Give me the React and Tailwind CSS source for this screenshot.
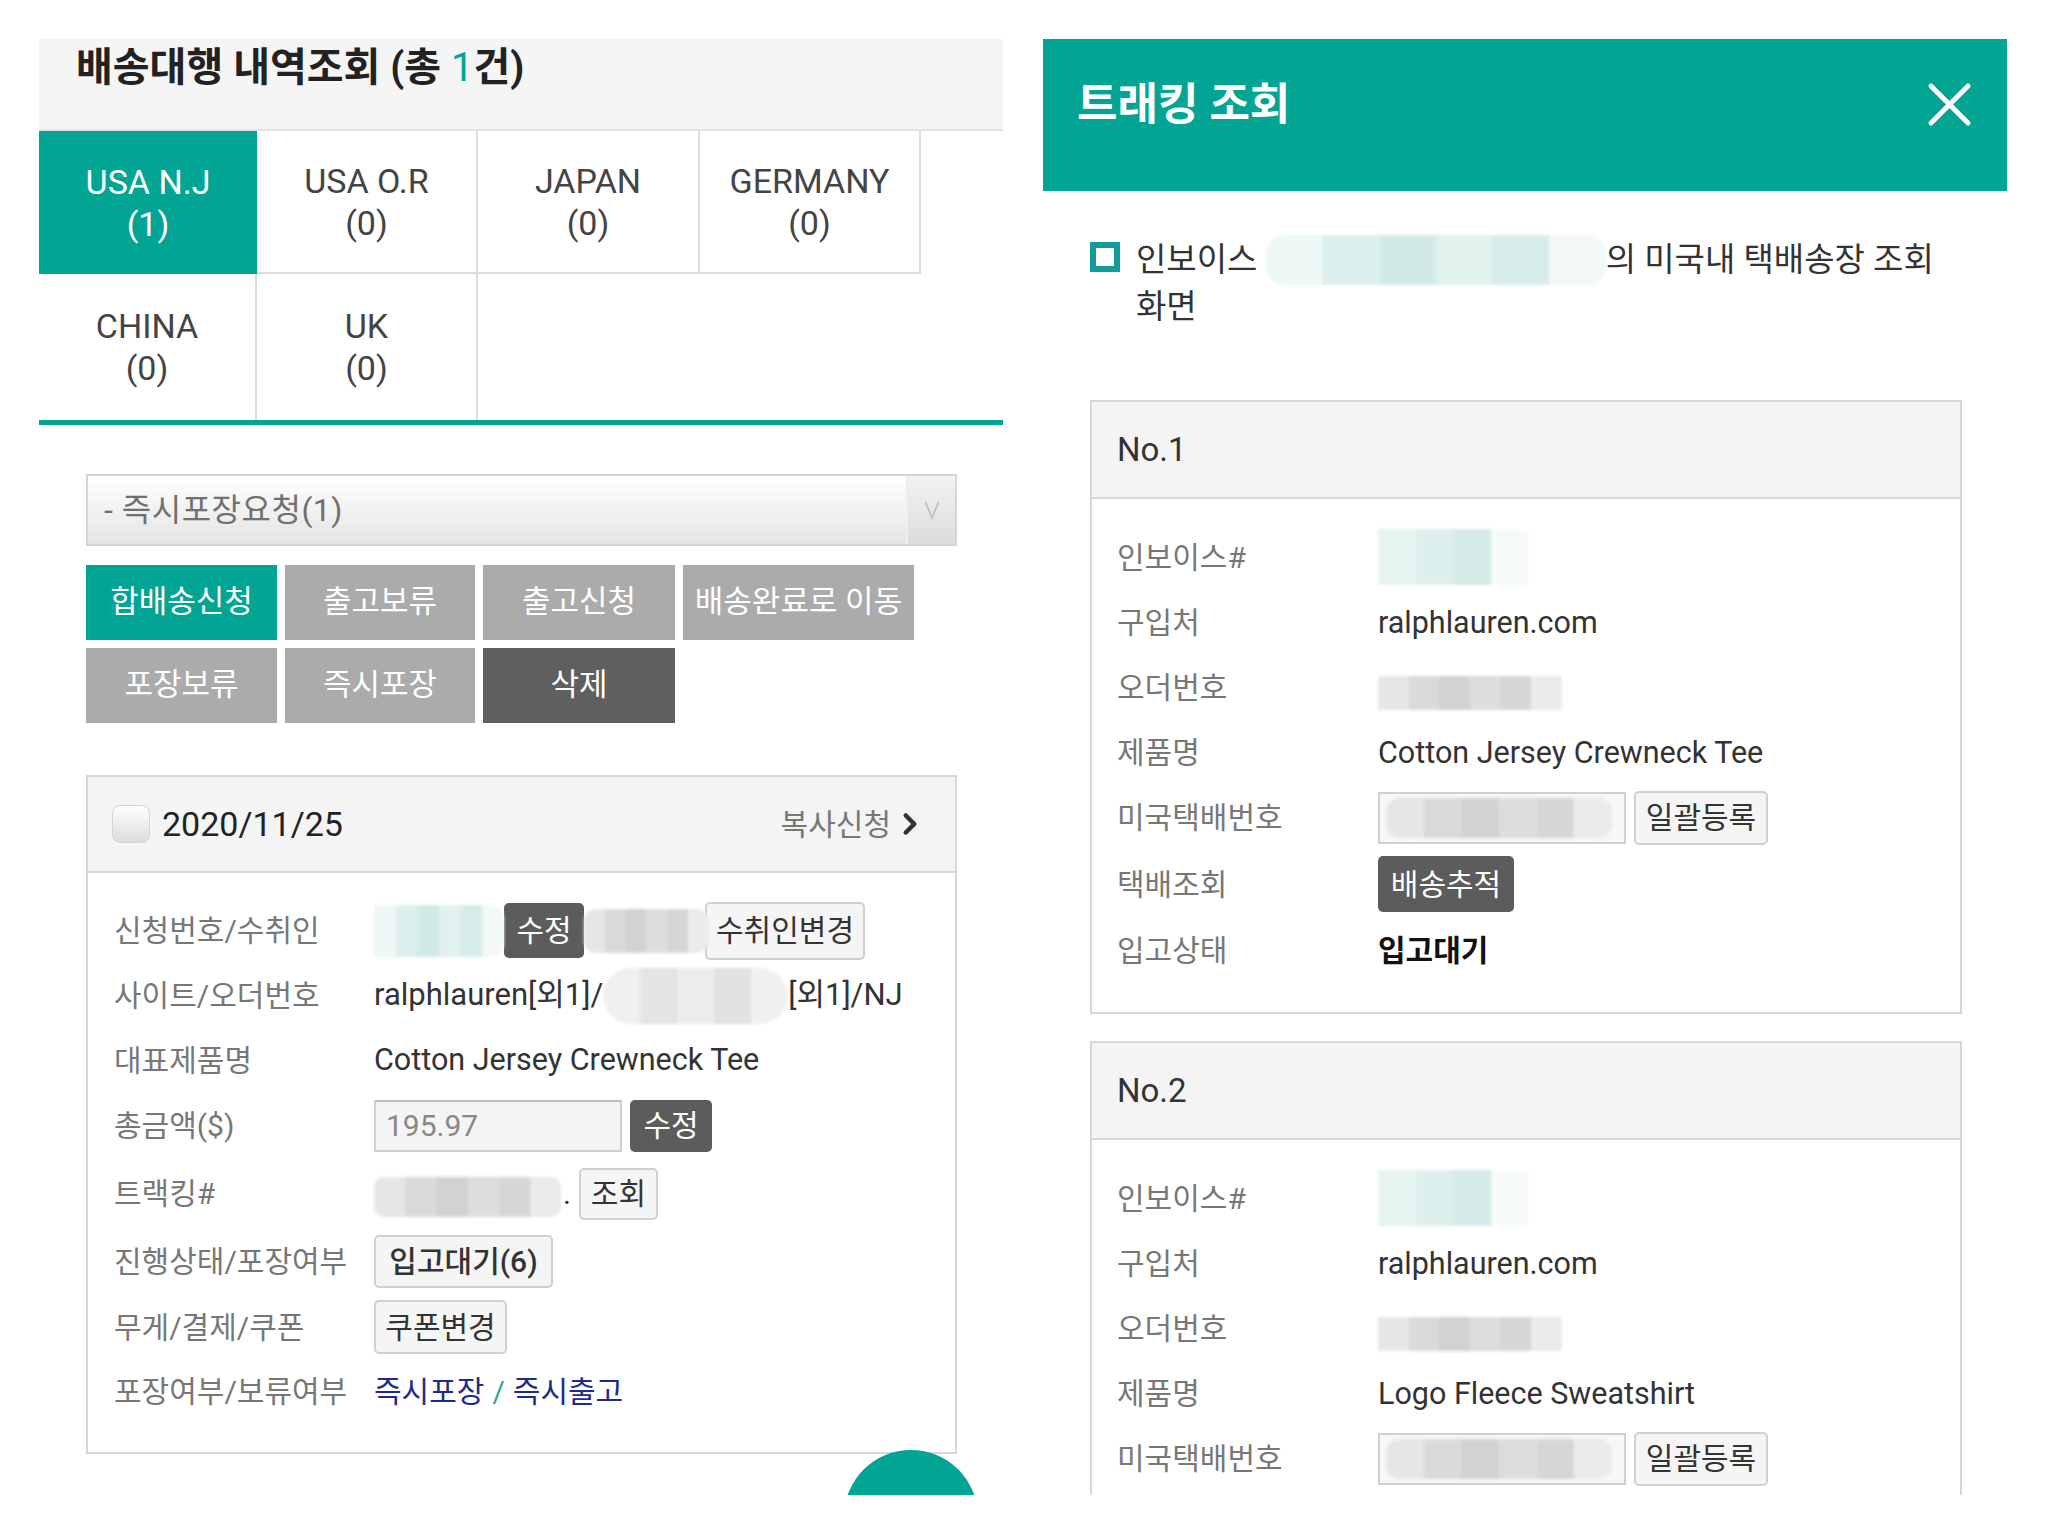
import { ChevronRight } from 'lucide-react'

const TEAL_CELLS = ['bg-[#eef8f6]', 'bg-[#dcefec]', 'bg-[#d2eae6]', 'bg-[#e0f1ee]', 'bg-[#d6ece9]', 'bg-[#f2f9f8]']
const GRAY_CELLS = ['bg-[#e6e6e6]', 'bg-[#dadada]', 'bg-[#d2d2d2]', 'bg-[#dddddd]', 'bg-[#d6d6d6]', 'bg-[#ebebeb]']

// pixelated placeholder for masked data
function Blur({ className = '', cells = GRAY_CELLS }) {
  return (
    <div className={`flex shrink-0 overflow-hidden blur-[1.5px] ${className}`}>
      {cells.map((c, i) => (
        <div key={i} className={`flex-1 ${c}`} />
      ))}
    </div>
  )
}

function LightBtn({ children, className = '' }) {
  return (
    <div
      className={`flex shrink-0 items-center justify-center rounded-[5px] border-2 border-[#d0d0d0] bg-[#f5f5f5] text-[#333] ${className}`}
    >
      {children}
    </div>
  )
}

function DarkBtn({ children, className = '' }) {
  return (
    <div className={`flex shrink-0 items-center justify-center rounded-[5px] bg-[#5c5c5c] text-white ${className}`}>
      {children}
    </div>
  )
}

function Row({ label, h, labelW, children }) {
  return (
    <div className={`flex items-center ${h}`}>
      <div className={`shrink-0 text-[#777] ${labelW}`}>{label}</div>
      <div className="flex items-center text-[#333]">{children}</div>
    </div>
  )
}

const tabs = [
  { name: 'USA N.J', count: 1, cls: 'bg-[#02a593] text-white' },
  { name: 'USA O.R', count: 0, cls: 'border-r-2 border-b-2 border-[#dedede] text-[#444]' },
  { name: 'JAPAN', count: 0, cls: 'border-r-2 border-b-2 border-[#dedede] text-[#444]' },
  { name: 'GERMANY', count: 0, cls: 'border-r-2 border-b-2 border-[#dedede] text-[#444]' },
  { name: 'CHINA', count: 0, cls: 'border-r-2 border-[#dedede] text-[#444]' },
  { name: 'UK', count: 0, cls: 'border-r-2 border-[#dedede] text-[#444]' },
]

const actions = [
  { label: '합배송신청', cls: 'w-[191px] bg-[#02a593]' },
  { label: '출고보류', cls: 'w-[190px] bg-[#ababab]' },
  { label: '출고신청', cls: 'w-[192px] bg-[#ababab]' },
  { label: '배송완료로 이동', cls: 'w-[231px] bg-[#ababab]' },
  { label: '포장보류', cls: 'w-[191px] bg-[#ababab]' },
  { label: '즉시포장', cls: 'w-[190px] bg-[#ababab]' },
  { label: '삭제', cls: 'w-[192px] bg-[#5f5f5f]' },
]

function LeftPanel() {
  return (
    <div className="w-[964px] shrink-0">
      <div className="h-[92px] border-b-2 border-[#e4e4e4] bg-[#f5f5f5] pl-[37px] pt-[2px]">
        <h1 className="text-[40px] font-bold leading-[54px] text-[#222]">
          배송대행 내역조회 (총 <span className="font-normal text-[#02a593]">1</span>건)
        </h1>
      </div>

      {/* region tabs */}
      <div className="grid grid-cols-[218px_221px_222px_221px] grid-rows-[143px_146px]">
        {tabs.map((t) => (
          <div
            key={t.name}
            className={`flex flex-col items-center justify-center text-[34px] leading-[42px] ${t.cls}`}
          >
            <span>{t.name}</span>
            <span>({t.count})</span>
          </div>
        ))}
      </div>
      <div className="h-[5px] bg-[#02a593]" />

      {/* status select */}
      <div className="ml-[47px] mt-[49px] flex h-[72px] w-[871px] border-2 border-[#d6d6d6] bg-[linear-gradient(#ffffff,#e4e4e4)]">
        <div className="flex flex-1 items-center pl-[16px] text-[32px] tracking-[0.5px] text-[#707070]">- 즉시포장요청(1)</div>
        <div className="flex w-[49px] items-center justify-center border-l-2 border-[#eeeeee] bg-[linear-gradient(#f2f2f2,#dcdcdc)]">
          <svg width="16" height="20" viewBox="0 0 16 20">
            <path d="M1.5 2 L8 18 L14.5 2" fill="none" stroke="#bdbdbd" strokeWidth="1.6" />
          </svg>
        </div>
      </div>

      <div className="ml-[47px] mt-[19px] flex w-[880px] flex-wrap gap-[8px]">
        {actions.map((a) => (
          <div
            key={a.label}
            className={`flex h-[75px] items-center justify-center text-[31px] text-white ${a.cls}`}
          >
            {a.label}
          </div>
        ))}
      </div>

      {/* order card */}
      <div className="ml-[47px] mt-[52px] h-[679px] w-[871px] border-2 border-[#d8d8d8]">
        <div className="flex h-[96px] items-center border-b-2 border-[#d8d8d8] bg-[#f4f4f4] pl-[24px] pr-[28px]">
          <div className="h-[38px] w-[38px] rounded-[8px] border border-[#d4d4d4] bg-[linear-gradient(#ffffff,#dcdcdc)]" />
          <span className="ml-[12px] text-[34px] text-[#222]">2020/11/25</span>
          <span className="ml-auto text-[30px] text-[#777]">복사신청</span>
          <ChevronRight className="ml-[2px] h-[34px] w-[34px] text-[#333]" strokeWidth={3.2} />
        </div>

        <div className="pl-[26px] pt-[25px] text-[30px]">
          <Row label="신청번호/수취인" h="h-[65px]" labelW="w-[260px]">
            <Blur className="h-[52px] w-[130px] rounded-r-[14px]" cells={TEAL_CELLS} />
            <DarkBtn className="h-[55px] w-[80px]">수정</DarkBtn>
            <Blur className="h-[44px] w-[125px] rounded-[12px]" />
            <LightBtn className="-ml-[4px] h-[58px] w-[160px]">수취인변경</LightBtn>
          </Row>
          <Row label="사이트/오더번호" h="h-[65px]" labelW="w-[260px]">
            <span className="text-[31px]">ralphlauren[외1]/</span>
            <Blur className="h-[56px] w-[185px] rounded-full" cells={['bg-[#efefef]', 'bg-[#e4e4e4]', 'bg-[#ececec]', 'bg-[#e2e2e2]', 'bg-[#f0f0f0]']} />
            <span className="text-[31px]">[외1]/NJ</span>
          </Row>
          <Row label="대표제품명" h="h-[64px]" labelW="w-[260px]">
            <span className="text-[30.5px]">Cotton Jersey Crewneck Tee</span>
          </Row>
          <Row label="총금액($)" h="h-[67px]" labelW="w-[260px]">
            <div className="flex h-[52px] w-[248px] items-center border-2 border-[#d0d0d0] border-t-[#bdbdbd] bg-[#f4f4f4] pl-[10px] text-[#888]">
              195.97
            </div>
            <DarkBtn className="ml-[8px] h-[52px] w-[82px]">수정</DarkBtn>
          </Row>
          <Row label="트랙킹#" h="h-[69px]" labelW="w-[260px]">
            <Blur className="mt-[6px] h-[40px] w-[187px] rounded-[10px]" />
            <span className="ml-[2px]">.</span>
            <LightBtn className="ml-[8px] h-[52px] w-[79px]">조회</LightBtn>
          </Row>
          <Row label="진행상태/포장여부" h="h-[67px]" labelW="w-[260px]">
            <LightBtn className="h-[53px] w-[179px] font-medium text-[#222]">입고대기(6)</LightBtn>
          </Row>
          <Row label="무게/결제/쿠폰" h="h-[64px]" labelW="w-[260px]">
            <LightBtn className="h-[54px] w-[133px]">쿠폰변경</LightBtn>
          </Row>
          <Row label="포장여부/보류여부" h="h-[64px]" labelW="w-[260px]">
            <span className="text-[#1f2b8c]">즉시포장</span>
            <span className="mx-[8px] text-[#2aa79a]">/</span>
            <span className="text-[#1f2b8c]">즉시출고</span>
          </Row>
        </div>
      </div>
    </div>
  )
}

function TrackCard({ no, product, first, rows }) {
  return (
    <div className={`w-[872px] border-2 border-[#d8d8d8] ${first ? 'mt-[71px] pb-[29px]' : 'mt-[27px] pb-[120px]'}`}>
      <div className="flex h-[97px] items-center border-b-2 border-[#d8d8d8] bg-[#f4f4f4] pl-[25px] text-[33px] text-[#333]">
        No.{no}
      </div>
      <div className="pl-[25px] pt-[25px] text-[30px]">
        <Row label="인보이스#" h="h-[66px]" labelW="w-[261px]">
          <Blur className="h-[56px] w-[150px]" cells={['bg-[#e6f4f2]', 'bg-[#dcefec]', 'bg-[#d4ebe7]', 'bg-[#f6fbfa]']} />
        </Row>
        <Row label="구입처" h="h-[65px]" labelW="w-[261px]">
          <span className="text-[30.5px]">ralphlauren.com</span>
        </Row>
        <Row label="오더번호" h="h-[65px]" labelW="w-[261px]">
          <Blur className="mt-[10px] h-[34px] w-[184px]" />
        </Row>
        <Row label="제품명" h="h-[65px]" labelW="w-[261px]">
          <span className="text-[30.5px]">{product}</span>
        </Row>
        <Row label="미국택배번호" h="h-[65px]" labelW="w-[261px]">
          <div className="flex h-[52px] w-[248px] items-center border-2 border-[#d0d0d0] bg-[#f7f7f7] pl-[6px]">
            <Blur className="h-[40px] w-[226px] rounded-[14px]" />
          </div>
          <LightBtn className="ml-[8px] h-[54px] w-[134px]">일괄등록</LightBtn>
        </Row>
        {rows && (
          <>
            <Row label="택배조회" h="h-[68px]" labelW="w-[261px]">
              <DarkBtn className="h-[56px] w-[136px]">배송추적</DarkBtn>
            </Row>
            <Row label="입고상태" h="h-[65px]" labelW="w-[261px]">
              <span className="font-bold text-[#111]">입고대기</span>
            </Row>
          </>
        )}
      </div>
    </div>
  )
}

function RightPanel() {
  return (
    <div className="w-[964px] shrink-0">
      <div className="flex h-[152px] items-start justify-between bg-[#02a593] pl-[34px] pr-[35px]">
        <h2 className="pt-[37px] text-[44px] font-bold leading-[58px] text-white">트래킹 조회</h2>
        <svg className="mt-[43px]" width="45" height="45" viewBox="0 0 45 45">
          <path d="M4 4 L41 41 M41 4 L4 41" stroke="white" strokeWidth="5" strokeLinecap="round" />
        </svg>
      </div>

      <div className="ml-[47px] mt-[44px] flex items-start">
        <div className="mt-[7px] h-[30px] w-[30px] shrink-0 border-[6px] border-[#129c98]" />
        <div className="ml-[16px] text-[33px] leading-[44px] text-[#333]">
          <div className="flex items-center whitespace-nowrap">
            <span>인보이스&nbsp;</span>
            <Blur className="h-[50px] w-[340px] rounded-[18px]" cells={TEAL_CELLS} />
            <span>의 미국내 택배송장 조회</span>
          </div>
          <div>화면</div>
        </div>
      </div>

      <div className="ml-[47px]">
        <TrackCard no={1} product="Cotton Jersey Crewneck Tee" first rows />
        <TrackCard no={2} product="Logo Fleece Sweatshirt" />
      </div>
    </div>
  )
}

export default function App() {
  return (
    <div className="relative h-[1536px] w-[2048px] overflow-hidden bg-white font-[Roboto,'Noto_Sans_CJK_KR',sans-serif]">
      <div className="flex h-[1495px] gap-[40px] overflow-hidden pl-[39px] pt-[39px]">
        <LeftPanel />
        <RightPanel />
      </div>
      {/* floating scroll-top button, cut off by the screenshot edge */}
      <div className="absolute left-[844px] top-[1450px] h-[45px] w-[134px] overflow-hidden">
        <div className="h-[134px] w-[134px] rounded-full bg-[#02a593]" />
      </div>
    </div>
  )
}
